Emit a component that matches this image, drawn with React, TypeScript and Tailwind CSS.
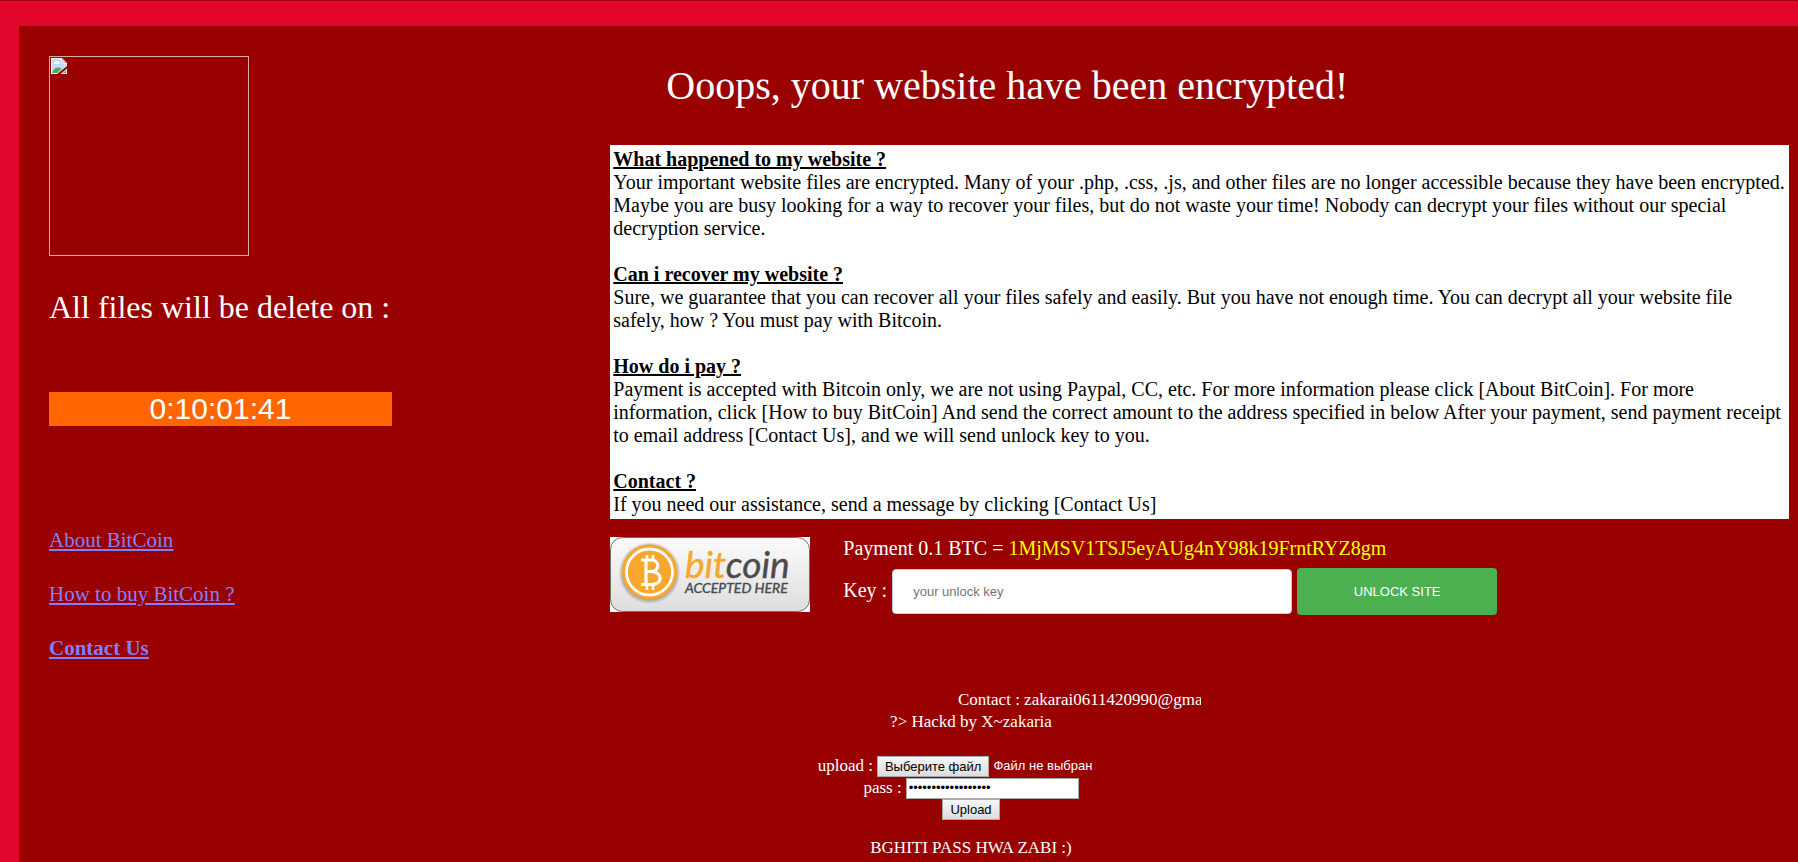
import React from "react";

const faq = [
  {
    title: "What happened to my website ?",
    body: "Your important website files are encrypted. Many of your .php, .css, .js, and other files are no longer accessible because they have been encrypted. Maybe you are busy looking for a way to recover your files, but do not waste your time! Nobody can decrypt your files without our special decryption service.",
  },
  {
    title: "Can i recover my website ?",
    body: "Sure, we guarantee that you can recover all your files safely and easily. But you have not enough time. You can decrypt all your website file safely, how ? You must pay with Bitcoin.",
  },
  {
    title: "How do i pay ?",
    body: "Payment is accepted with Bitcoin only, we are not using Paypal, CC, etc. For more information please click [About BitCoin]. For more information, click [How to buy BitCoin] And send the correct amount to the address specified in below After your payment, send payment receipt to email address [Contact Us], and we will send unlock key to you.",
  },
  {
    title: "Contact ?",
    body: "If you need our assistance, send a message by clicking [Contact Us]",
  },
];

function BrokenImage() {
  return (
    <div className="h-[200px] w-[200px] border border-[#d9a9a9] p-px">
      <svg width="16" height="16" viewBox="0 0 16 16" aria-hidden="true">
        <path d="M0 0H11L16 5V8L6 16H0Z" fill="#f4f4f4" />
        <path d="M1 1H10V5L15 7V8L6.500 15H1Z" fill="#c3d8f7" />
        <path d="M3 5.500a1.500 1.500 0 0 1 1.500-2 2 2 0 0 1 3.500.5 1.200 1.200 0 0 1 0 2H3.500Z" fill="#fff" />
        <path d="M1 15C2 11.500 4.500 9.500 7 9.500c1.600 0 2.600.5 3.600 1.500L6 15Z" fill="#4bb04b" />
        <path d="M11 0L16 5H11Z" fill="#8a9099" />
        <path d="M11.500 1.500L14.500 4.500H11.500Z" fill="#fff" />
        <path d="M16 10.500V16H9.500Z" fill="#e8efe8" />
        <path d="M15 12.500V15H12Z" fill="#4bb04b" />
      </svg>
    </div>
  );
}

function BitcoinBadge() {
  return (
    <svg width="200" height="75" viewBox="0 0 200 75" role="img" aria-label="bitcoin accepted here" className="shrink-0">
      <defs>
        <linearGradient id="badge" x1="0" y1="0" x2="0" y2="1">
          <stop offset="0" stopColor="#fbfbfb" />
          <stop offset="1" stopColor="#dedede" />
        </linearGradient>
        <radialGradient id="halo">
          <stop offset="0.86" stopColor="#8a8a8a" stopOpacity="0.7" />
          <stop offset="1" stopColor="#8a8a8a" stopOpacity="0" />
        </radialGradient>
      </defs>
      <rect width="200" height="75" fill="#fff" />
      <rect x="0.5" y="0.5" width="199" height="74" rx="12" fill="url(#badge)" stroke="#6f6f6f" />
      <circle cx="39.500" cy="36" r="31" fill="url(#halo)" />
      <circle cx="39.500" cy="35" r="27.500" fill="#f7a72b" />
      <circle cx="39.500" cy="35" r="23" fill="none" stroke="#fff" strokeWidth="2.800" />
      <g fill="none" stroke="#fff" strokeWidth="3.200">
        <path d="M31 23H41C50 23 50 34.500 41 34.500H36M41 34.500C53 34.500 53 47.500 42 47.500H31M36 23V47.500" />
        <path d="M37 18V23M43 18V23M37 47V53M43 47V53" strokeWidth="2.600" />
      </g>
      <text x="75" y="41" strokeWidth="0.4" className="font-[Lato] text-[37px] italic">
        <tspan fill="#f7a72b" stroke="#f7a72b">bit</tspan>
        <tspan fill="#4a4b4d" stroke="#4a4b4d">coin</tspan>
      </text>
      <text x="75" y="56" fill="#4a4b4d" stroke="#4a4b4d" strokeWidth="0.4" className="font-[Lato] text-[14px] italic">
        ACCEPTED HERE
      </text>
    </svg>
  );
}

export default function App() {
  const native =
    "border border-[#a9a9a9] bg-linear-to-b from-[#f6f6f6] to-[#dddddd] px-[7px] font-['Liberation_Sans',sans-serif] text-[13px] leading-[19px] text-black";
  return (
    <div className="min-h-screen bg-[#990000] pt-px font-['Liberation_Serif',serif] text-white">
      <div className="min-h-screen border-t-[25px] border-l-[19px] border-[#e2062c] pt-[30px] pr-[9px] pl-[30px]">
        <main className="grid grid-cols-[10fr_21fr]">
          <section className="flex flex-col items-start">
            <BrokenImage />
            <div className="mt-[29px] flex min-w-[343px] flex-col">
              <p className="text-[32px] leading-[44px]">All files will be delete on :</p>
              <p className="mt-[63px] bg-[#ff6600] text-center font-['Liberation_Sans',sans-serif] text-[30px] leading-[34px]">
                0:10:01:41
              </p>
            </div>
            <nav className="mt-[101px] flex flex-col items-start gap-[27px] text-[21px] leading-[27px] text-[#8080ff] underline">
              <a href="#about">About BitCoin</a>
              <a href="#buy">How to buy BitCoin ?</a>
              <a href="#contact" className="font-bold">
                Contact Us
              </a>
            </nav>
          </section>

          <section>
            <h1 className="pt-[7px] pl-14 text-[40px] leading-[46px]">Ooops, your website have been encrypted!</h1>
            <div className="mt-9 flex flex-col gap-[23px] bg-white p-[3px] text-[20px] leading-[23px] text-black">
              {faq.map((item) => (
                <article key={item.title}>
                  <h2 className="font-bold underline">{item.title}</h2>
                  <p>{item.body}</p>
                </article>
              ))}
            </div>
            <div className="mt-[18px] flex items-start gap-[33px]">
              <BitcoinBadge />
              <div className="text-[20px]">
                <p className="leading-[23px]">
                  Payment 0.1 BTC = <span className="text-[#ffff00]">1MjMSV1TSJ5eyAUg4nY98k19FrntRYZ8gm</span>
                </p>
                <form className="mt-2 flex items-center" onSubmit={(e) => e.preventDefault()}>
                  <label htmlFor="key" className="pr-[5px] pb-1">
                    Key :
                  </label>
                  <input
                    id="key"
                    type="text"
                    placeholder="your unlock key"
                    className="h-[45px] w-[400px] rounded border border-[#cccccc] bg-white px-5 font-['Liberation_Sans',sans-serif] text-[13px] text-black placeholder:text-[#757575]"
                  />
                  <button
                    type="submit"
                    className="ml-[5px] h-[47px] w-[200px] rounded bg-[#4caf50] font-['Liberation_Sans',sans-serif] text-[13px] text-white"
                  >
                    UNLOCK SITE
                  </button>
                </form>
              </div>
            </div>
          </section>
        </main>

        <footer className="mt-[27px] flex flex-col items-center pl-[104px] text-[17px] leading-[22px]">
          <p className="w-[460px] overflow-hidden pl-[217px] whitespace-nowrap">Contact : zakarai0611420990@gma</p>
          <p>?&gt; Hackd by X~zakaria</p>
          <form className="mt-[22px] flex flex-col items-center" onSubmit={(e) => e.preventDefault()}>
            <div className="mr-[32px] flex items-center gap-1">
              <span>upload :</span>
              <input id="file" type="file" className="peer sr-only" />
              <label htmlFor="file" className={native}>
                Выберите файл
              </label>
              <span className="font-['Liberation_Sans',sans-serif] text-[13px]">Файл не выбран</span>
            </div>
            <div className="flex items-center gap-1">
              <label htmlFor="pass">pass :</label>
              <input
                id="pass"
                type="password"
                defaultValue="unlock-site-backup"
                className="h-[21px] w-[173px] border border-[#a9a9a9] bg-white px-[2px] font-['Liberation_Sans',sans-serif] text-[13px] text-black"
              />
            </div>
            <button type="submit" className={native}>
              Upload
            </button>
          </form>
          <p className="mt-[17px]">BGHITI PASS HWA ZABI :)</p>
        </footer>
      </div>
    </div>
  );
}
